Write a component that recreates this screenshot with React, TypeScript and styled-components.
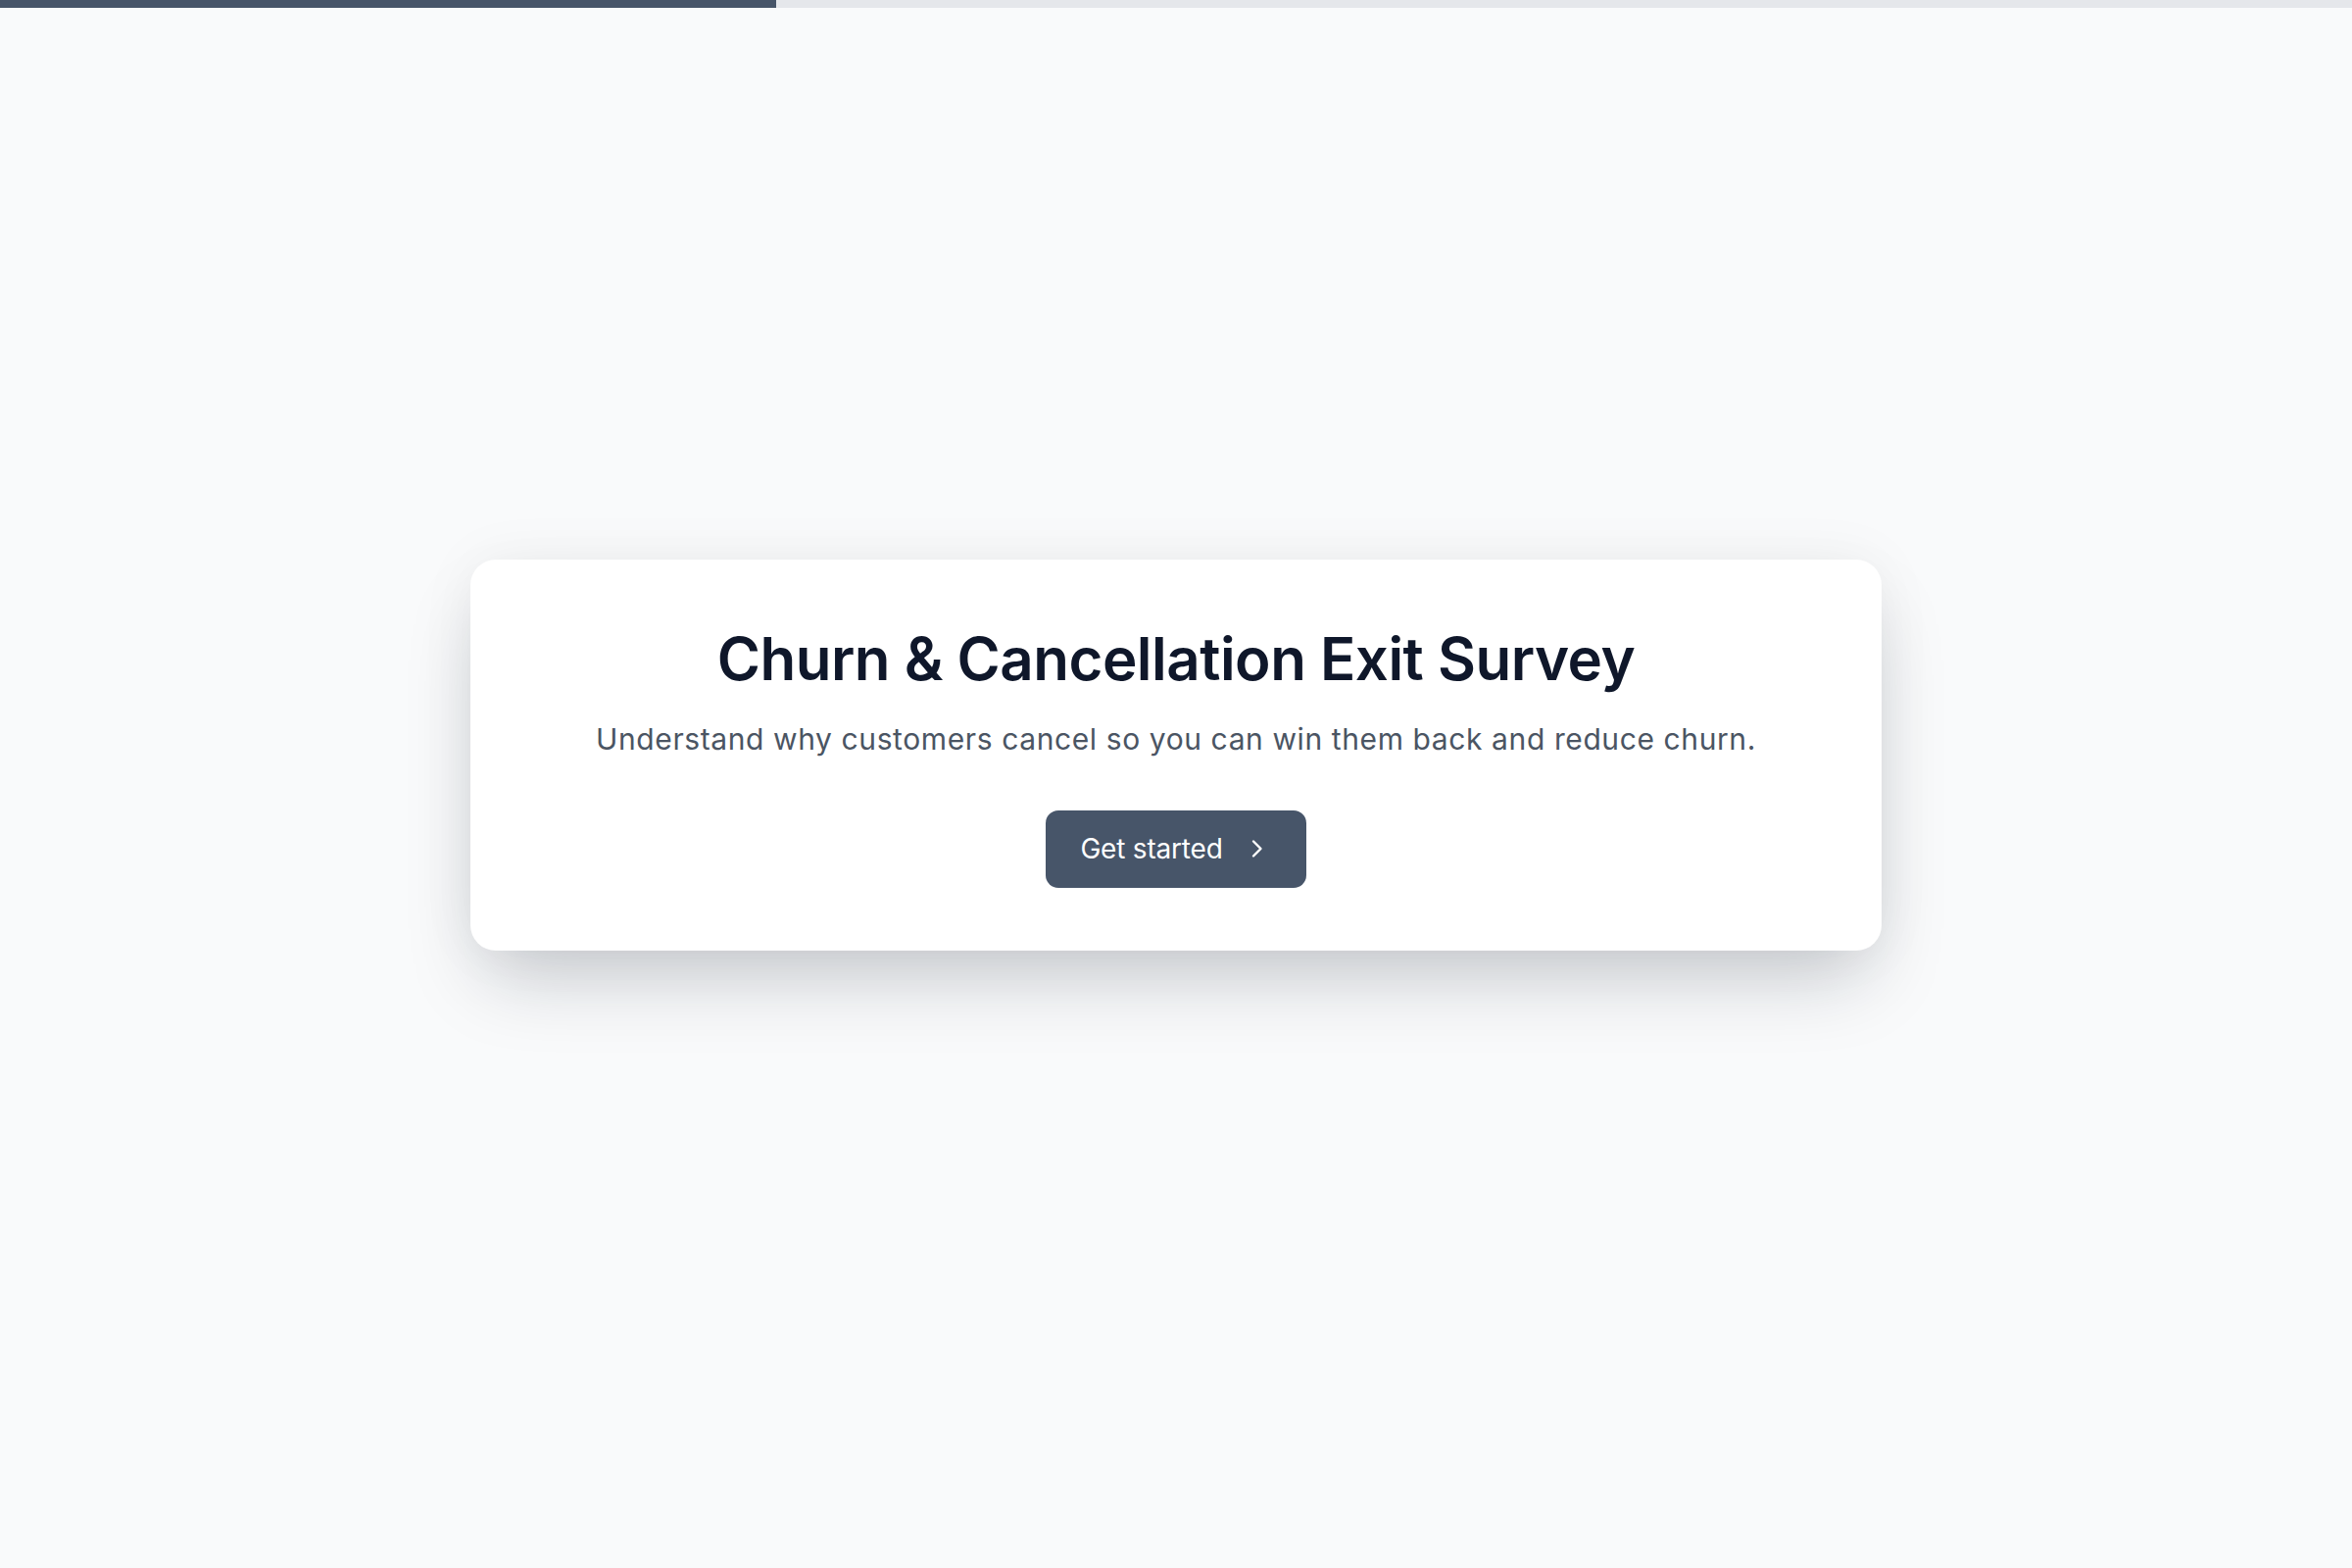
import React from "react";
import styled, { createGlobalStyle } from "styled-components";

const GlobalStyle = createGlobalStyle`
  * { box-sizing: border-box; }
  html, body { margin: 0; padding: 0; }
  body {
    background: #f9fafb;
    font-family: "Inter", "Noto Sans", sans-serif;
  }
`;

const Page = styled.div`
  min-height: 100vh;
  display: flex;
  flex-direction: column;
  background: #f9fafb;
`;

const ProgressTrack = styled.div`
  height: 8px;
  width: 100%;
  background: #e5e7eb;
  flex-shrink: 0;
`;

const ProgressFill = styled.div`
  height: 100%;
  background: #475569;
`;

const Main = styled.main`
  flex: 1;
  display: flex;
  align-items: center;
  justify-content: center;
  padding-bottom: 68px;
`;

const Card = styled.section`
  width: 1440px;
  background: #ffffff;
  border-radius: 26px;
  padding: 65px 48px 64px;
  display: flex;
  flex-direction: column;
  align-items: center;
  text-align: center;
  box-shadow: 0 40px 80px -16px rgba(15, 23, 42, 0.22),
    0 0 60px rgba(15, 23, 42, 0.05);
`;

const Title = styled.h1`
  margin: 0;
  font-size: 60px;
  line-height: 72px;
  font-weight: 600;
  color: #0f172a;
  letter-spacing: -0.5px;
`;

const Subtitle = styled.p`
  margin: 24px 0 0;
  font-size: 30px;
  line-height: 45px;
  font-weight: 400;
  color: #4b5563;
  letter-spacing: 0.6px;
`;

const StartButton = styled.button`
  margin-top: 50px;
  height: 79px;
  padding: 0 37px 0 35px;
  display: inline-flex;
  align-items: center;
  gap: 24px;
  border: none;
  border-radius: 13px;
  background: #475569;
  color: #ffffff;
  font-family: "Inter", "Noto Sans", sans-serif;
  font-size: 28px;
  font-weight: 400;
  letter-spacing: -0.2px;
  cursor: pointer;
`;

const Chevron = () => (
  <svg width="24" height="24" viewBox="0 0 24 24" fill="none">
    <path
      d="M7 4.5 L14.5 12 L7 19.5"
      stroke="#ffffff"
      strokeWidth="2.4"
      strokeLinecap="round"
      strokeLinejoin="round"
    />
  </svg>
);

export default function App() {
  const progress = 33;
  return (
    <>
      <GlobalStyle />
      <Page>
        <ProgressTrack>
          <ProgressFill style={{ width: `${progress}%` }} />
        </ProgressTrack>
        <Main>
          <Card>
            <Title>Churn &amp; Cancellation Exit Survey</Title>
            <Subtitle>
              Understand why customers cancel so you can win them back and reduce churn.
            </Subtitle>
            <StartButton type="button">
              <span>Get started</span>
              <Chevron />
            </StartButton>
          </Card>
        </Main>
      </Page>
    </>
  );
}
